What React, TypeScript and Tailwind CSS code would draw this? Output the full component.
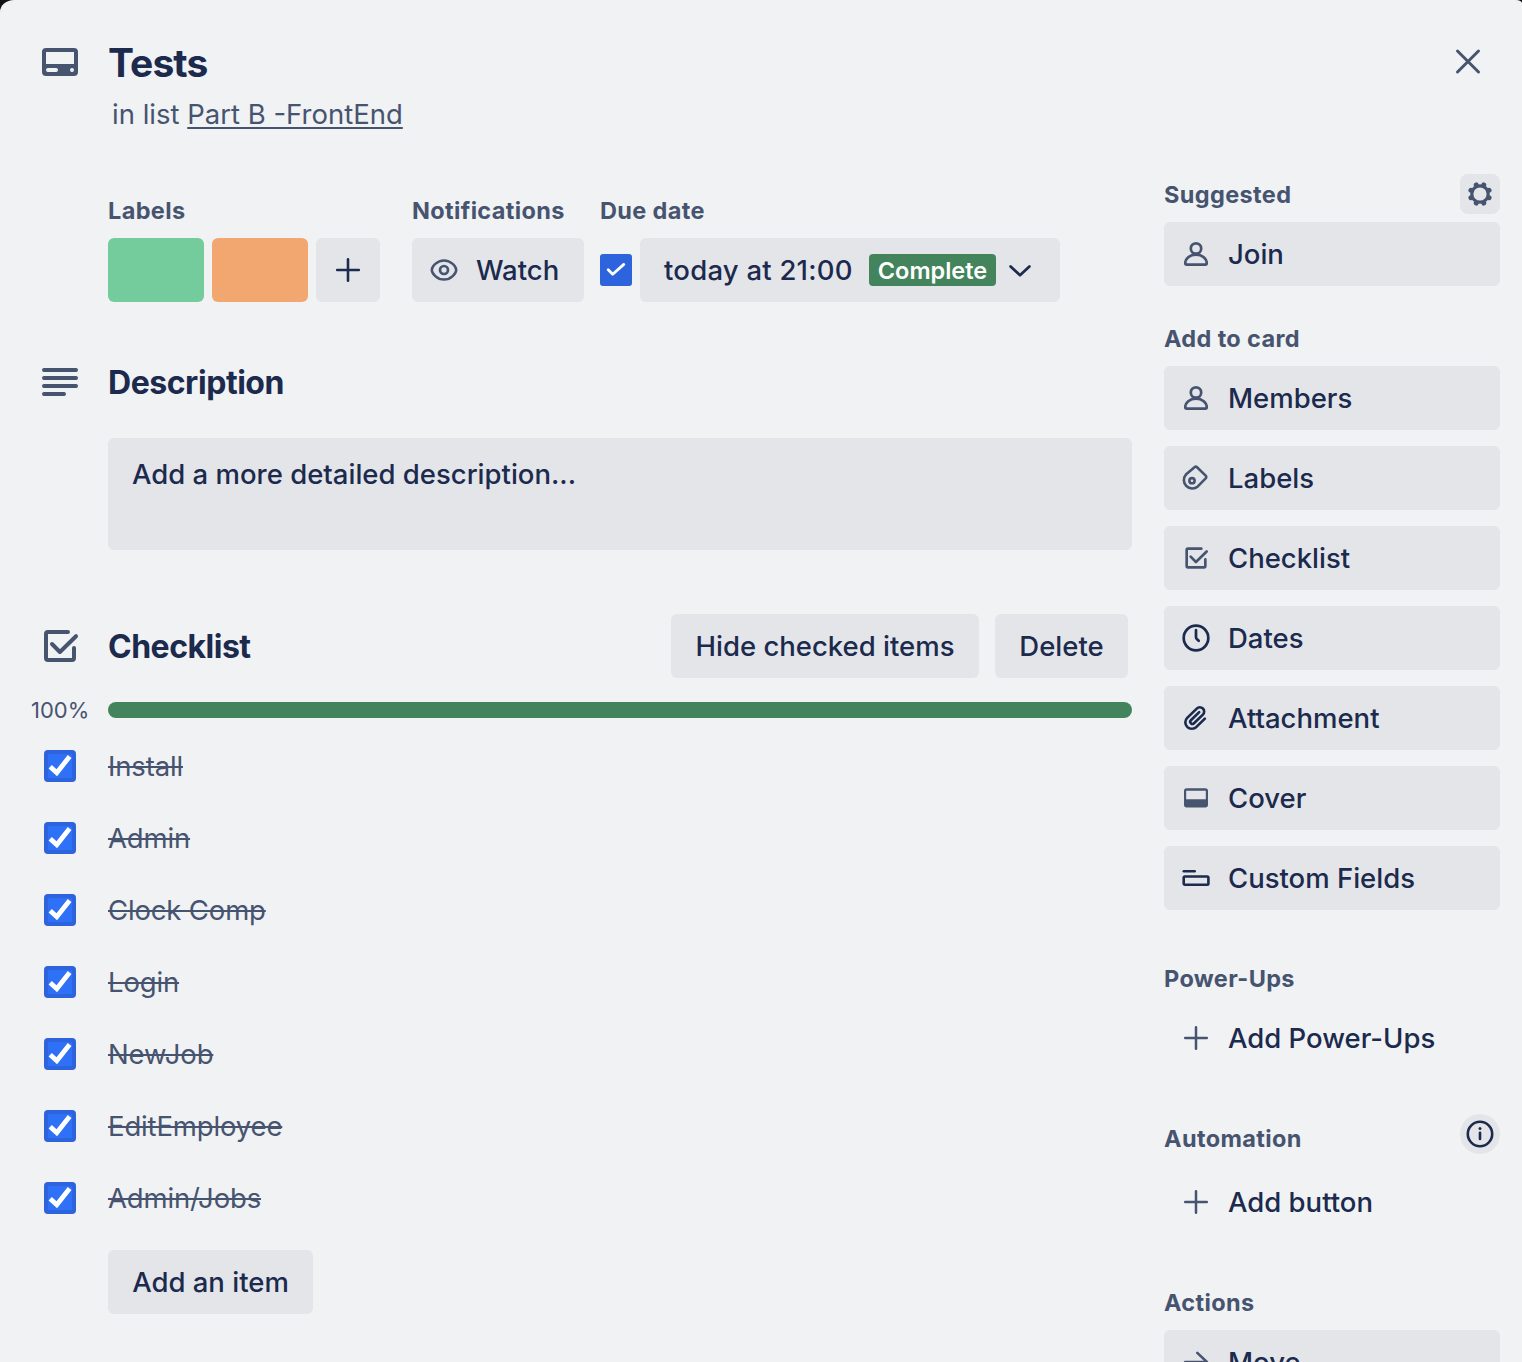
import type { ReactNode } from "react";

const SLATE = "text-[#475470]";
const NAVY = "text-[#1b2a4d]";

function Icon({ size = 32, box = 32, className = "", children }: { size?: number; box?: number; className?: string; children: ReactNode }) {
  return (
    <svg
      width={size}
      height={size}
      viewBox={`0 0 ${box} ${box}`}
      fill="none"
      stroke="currentColor"
      strokeLinecap="round"
      strokeLinejoin="round"
      className={`shrink-0 ${className}`}
    >
      {children}
    </svg>
  );
}

const CardIcon = () => (
  <Icon size={48} box={24} className={SLATE}>
    <path
      fill="currentColor"
      stroke="none"
      fillRule="evenodd"
      d="M5 5h14a2 2 0 0 1 2 2v10a2 2 0 0 1-2 2H5a2 2 0 0 1-2-2V7a2 2 0 0 1 2-2ZM5 7v6h14V7H5ZM6 15a1 1 0 0 0 0 2h4a1 1 0 0 0 0-2H6ZM18 15a1 1 0 0 0 0 2a1 1 0 0 0 0-2Z"
    />
  </Icon>
);

const TextIcon = () => (
  <Icon size={48} box={24} className={SLATE}>
    <path strokeWidth="2" d="M4 6h16M4 10h16M4 14h16M4 18h10" />
  </Icon>
);

const ChecklistIcon = ({ size = 32 }: { size?: number }) => (
  <Icon size={size} box={24} className={SLATE}>
    <path strokeWidth="2" d="M16 5H6a1 1 0 0 0-1 1v12a1 1 0 0 0 1 1h12a1 1 0 0 0 1-1v-5" />
    <path strokeWidth="2" d="M8 11l3.95 4L20 7.1" />
  </Icon>
);

const PersonIcon = () => (
  <Icon className={SLATE}>
    <circle cx="16" cy="10.5" r="5.2" strokeWidth="2.7" />
    <path strokeWidth="2.7" d="M5.3 25.2C5.3 20.6 9.6 16.7 16 16.7S26.7 20.6 26.7 25.2Q26.7 26.6 25.3 26.6H6.7Q5.3 26.6 5.3 25.2Z" />
  </Icon>
);

const LabelIcon = () => (
  <Icon className={SLATE}>
    <path strokeWidth="2.6" d="M14.8 5Q15.8 4.1 16.8 5L25.9 13.9Q26.8 15 25.9 16.1L17.8 24.4A8.4 8.4 0 0 1 5.9 12.6Z" />
    <circle cx="12" cy="18.7" r="2.6" strokeWidth="2.6" />
  </Icon>
);

const ClockIcon = () => (
  <Icon className={NAVY}>
    <circle cx="16" cy="16" r="12.3" strokeWidth="2.7" />
    <path strokeWidth="2.7" d="M16 8.2V15.3Q16 16.3 16.8 17L18.7 18.8" />
  </Icon>
);

const ClipIcon = () => (
  <Icon box={24} className={NAVY}>
    <path
      fill="currentColor"
      stroke="none"
      d="M11.643 17.965c-1.53 1.495-4.016 1.496-5.542.004a3.773 3.773 0 0 1 .002-5.412l7.147-6.985a2.316 2.316 0 0 1 3.233-.003c.893.873.895 2.282.004 3.153l-6.703 6.55a.653.653 0 0 1-.914-.008.62.62 0 0 1 0-.902l6.229-6.087a.941.941 0 0 0 0-1.353.995.995 0 0 0-1.384 0l-6.23 6.087a2.502 2.502 0 0 0 0 3.607 2.643 2.643 0 0 0 3.683.009l6.703-6.55a4.074 4.074 0 0 0-.003-5.859 4.306 4.306 0 0 0-6.002.003l-7.148 6.985a5.655 5.655 0 0 0-.001 8.118c2.29 2.237 6.015 2.237 8.308-.005l6.319-6.175a.942.942 0 0 0 0-1.353.997.997 0 0 0-1.385 0l-6.316 6.176z"
    />
  </Icon>
);

const CoverIcon = () => (
  <Icon className={SLATE}>
    <path
      fill="currentColor"
      stroke="none"
      fillRule="evenodd"
      d="M6.67 6.2h18.66A2.67 2.67 0 0 1 28 8.87v14A2.67 2.67 0 0 1 25.33 25.5H6.67A2.67 2.67 0 0 1 4 22.87v-14A2.67 2.67 0 0 1 6.67 6.2ZM6.2 8.8v8.5h19.6V8.8H6.2Z"
    />
  </Icon>
);

const FieldsIcon = () => (
  <Icon className={NAVY}>
    <path strokeWidth="2.6" d="M3.8 9.3H14.7" />
    <rect x="3.7" y="14.5" width="24.7" height="8.2" rx="1.2" strokeWidth="2.6" />
  </Icon>
);

const PlusIcon = ({ className = SLATE, w = 2.5 }: { className?: string; w?: number }) => (
  <Icon className={className}>
    <path strokeWidth={w} d="M16 5.2V26.8M5.2 16H26.8" />
  </Icon>
);

const ArrowIcon = () => (
  <Icon className={SLATE}>
    <path strokeWidth="2.5" d="M5.1 16H26.9M17.3 6.8L26.9 16L17.3 25.2" />
  </Icon>
);

const EyeIcon = () => (
  <Icon className={SLATE}>
    <path strokeWidth="2.5" d="M3.8 16C3.8 12.6 9 6.4 16 6.4S28.2 12.6 28.2 16S23 25.6 16 25.6S3.8 19.4 3.8 16Z" />
    <circle cx="16" cy="16" r="4" strokeWidth="2.7" />
  </Icon>
);

const GearIcon = () => (
  <Icon className={SLATE}>
    <circle cx="16" cy="16" r="8.2" strokeWidth="3.2" />
    <g fill="currentColor" stroke="none">
      {[22.5, 67.5, 112.5, 157.5, 202.5, 247.5, 292.5, 337.5].map((a) => (
        <circle key={a} cx="25.8" cy="16" r="2.5" transform={`rotate(${a} 16 16)`} />
      ))}
    </g>
  </Icon>
);

const InfoIcon = () => (
  <Icon className={NAVY}>
    <circle cx="16" cy="16" r="12.2" strokeWidth="2.6" />
    <path strokeWidth="2.6" d="M16 14.9V21" />
    <circle cx="16" cy="10.6" r="1.5" fill="currentColor" stroke="none" />
  </Icon>
);

function Heading({ children }: { children: ReactNode }) {
  return <h3 className="pt-px text-[23.5px] leading-6 font-[650] tracking-[0.36px] whitespace-nowrap text-[#475470]">{children}</h3>;
}

function SideHeading({ title, aside }: { title: string; aside?: ReactNode }) {
  return (
    <div className="flex h-10 items-center justify-between">
      <div className="pt-px">
        <Heading>{title}</Heading>
      </div>
      {aside}
    </div>
  );
}

function SideButton({ icon, label, plain }: { icon: ReactNode; label: string; plain?: boolean }) {
  return (
    <button
      className={`flex h-16 w-full shrink-0 items-center gap-4 rounded-md px-4 text-[27.5px] font-medium whitespace-nowrap text-[#1b2a4d] ${plain ? "" : "bg-[#e4e5e9]"}`}
    >
      {icon}
      <span className="pt-0.5">{label}</span>
    </button>
  );
}

function GrayButton({ children, className }: { children: ReactNode; className: string }) {
  return (
    <button className={`flex h-16 items-center rounded-md bg-[#e4e5e9] text-[27.5px] font-medium whitespace-nowrap text-[#1b2a4d] ${className}`}>
      {children}
    </button>
  );
}

function CheckItem({ label }: { label: string }) {
  return (
    <li className="flex h-[72px] items-start">
      <span className="ml-11 h-8 w-8 shrink-0 rounded-[4px] bg-[#2d63dd]">
        <svg width="32" height="32" viewBox="0 0 32 32" fill="none">
          <rect x="4" y="4" width="24" height="24" fill="#2f71f6" />
          <path d="M6.2 16.7L12.8 22.8L25.6 6.5" stroke="#fff" strokeWidth="4.8" />
        </svg>
      </span>
      <span className="ml-8 text-[27.5px] leading-8 tracking-[-0.15px] whitespace-nowrap text-[#475470] line-through decoration-2">{label}</span>
    </li>
  );
}

const cardActions: [string, ReactNode][] = [
  ["Members", <PersonIcon />],
  ["Labels", <LabelIcon />],
  ["Checklist", <ChecklistIcon />],
  ["Dates", <ClockIcon />],
  ["Attachment", <ClipIcon />],
  ["Cover", <CoverIcon />],
  ["Custom Fields", <FieldsIcon />],
];

const items = ["Install", "Admin", "Clock Comp", "Login", "NewJob", "EditEmployee", "Admin/Jobs"];

export default function App() {
  return (
    <div className="h-[1362px] w-[1522px] overflow-hidden bg-[#10120f] font-['Inter',sans-serif]">
      <div className="h-full overflow-hidden rounded-tl-[14px_12px] rounded-tr-[6px_3px] bg-[#f1f2f4]">
        <header className="flex h-[166px] items-start">
          <div className="mt-[38px] ml-9">
            <CardIcon />
          </div>
          <div className="mt-[39px] ml-6 flex-1">
            <h1 className="text-[39px] leading-[48px] font-[650] tracking-[-0.9px] text-[#1b2a4d]">Tests</h1>
            <p className="mt-[11px] ml-1 text-[27.5px] leading-8 text-[#475470]">
              in list <span className="underline decoration-2 underline-offset-[3px]">Part B -FrontEnd</span>
            </p>
          </div>
          <button className="mt-[45px] mr-[38px]">
            <Icon className={SLATE}>
              <path strokeWidth="3" d="M5.5 6L26.5 27M26.5 6L5.5 27" />
            </Icon>
          </button>
        </header>

        <div className="flex gap-8">
          <main className="w-[1132px] shrink-0 pt-8">
            <section className="ml-[108px] flex">
              <div className="w-[304px]">
                <Heading>Labels</Heading>
                <div className="mt-[15px] flex gap-2">
                  <div className="h-16 w-24 rounded-md bg-[#74cc9c]" />
                  <div className="h-16 w-24 rounded-md bg-[#f2a770]" />
                  <GrayButton className="w-16 justify-center">
                    <PlusIcon className={NAVY} w={2.6} />
                  </GrayButton>
                </div>
              </div>
              <div className="w-[188px]">
                <Heading>Notifications</Heading>
                <GrayButton className="mt-[15px] w-[172px] gap-4 pl-4">
                  <EyeIcon />
                  <span className="pt-0.5">Watch</span>
                </GrayButton>
              </div>
              <div>
                <Heading>Due date</Heading>
                <div className="mt-[15px] flex items-center gap-2">
                  <span className="h-8 w-8 rounded-[3px] bg-[#2d63dd]">
                    <Icon className="text-white">
                      <path strokeWidth="2.8" d="M8.2 15.8L12.7 20.2L23.8 10.4" />
                    </Icon>
                  </span>
                  <GrayButton className="w-[420px] pl-6">
                    <span className="w-[205px] pt-0.5 text-left tracking-[0.23px]">today at 21:00</span>
                    <span className="flex h-8 w-[127px] items-center justify-center rounded-[4px] bg-[#43845d] pt-0.5 text-[23.5px] font-semibold text-white">
                      Complete
                    </span>
                    <Icon className={`ml-2 ${NAVY}`}>
                      <path strokeWidth="2.7" d="M6.6 12.4L16 21.2L25.4 12.4" />
                    </Icon>
                  </GrayButton>
                </div>
              </div>
            </section>

            <section className="mt-14">
              <div className="flex h-12 items-center gap-6 pl-9">
                <TextIcon />
                <h2 className="pt-0.5 text-[32px] font-[650] tracking-[-0.45px] text-[#1b2a4d]">Description</h2>
              </div>
              <div className="mt-8 ml-[108px] h-28 rounded-md bg-[#e4e5e9] px-6 pt-5 text-[27.5px] leading-8 font-medium text-[#1b2a4d]">
                Add a more detailed description...
              </div>
            </section>

            <section className="mt-16">
              <div className="flex h-16 items-center pr-1 pl-9">
                <ChecklistIcon size={48} />
                <h2 className="ml-6 flex-1 pt-0.5 text-[32px] font-[650] tracking-[-0.5px] text-[#1b2a4d]">Checklist</h2>
                <GrayButton className="w-[308px] justify-center pt-0.5">Hide checked items</GrayButton>
                <GrayButton className="ml-4 w-[133px] justify-center pt-0.5">Delete</GrayButton>
              </div>
              <div className="mt-6 flex h-4 items-center">
                <span className="w-[108px] pl-[31px] text-[22px] leading-4 text-[#475470]">100%</span>
                <div className="h-4 flex-1 rounded-full bg-[#43845d]" />
              </div>
              <ul className="mt-8">
                {items.map((label) => (
                  <CheckItem key={label} label={label} />
                ))}
              </ul>
              <GrayButton className="-mt-1 ml-[108px] w-[205px] justify-center pt-0.5">Add an item</GrayButton>
            </section>
          </main>

          <aside className="flex w-[336px] shrink-0 flex-col pt-2">
            <SideHeading
              title="Suggested"
              aside={
                <button className="flex h-10 w-10 items-center justify-center rounded-lg bg-[#e4e5e9]">
                  <GearIcon />
                </button>
              }
            />
            <div className="mt-2 mb-8">
              <SideButton icon={<PersonIcon />} label="Join" />
            </div>
            <SideHeading title="Add to card" />
            <div className="mt-2 mb-12 flex flex-col gap-4">
              {cardActions.map(([label, icon]) => (
                <SideButton key={label} icon={icon} label={label} />
              ))}
            </div>
            <SideHeading title="Power-Ups" />
            <div className="mt-2 mb-11">
              <SideButton icon={<PlusIcon />} label="Add Power-Ups" plain />
            </div>
            <div className="flex h-10 justify-between">
              <div className="pt-3">
                <Heading>Automation</Heading>
              </div>
              <button className="flex h-10 w-10 items-center justify-center rounded-full bg-[#e4e5e9]">
                <InfoIcon />
              </button>
            </div>
            <div className="mt-4 mb-12">
              <SideButton icon={<PlusIcon />} label="Add button" plain />
            </div>
            <SideHeading title="Actions" />
            <div className="mt-2">
              <SideButton icon={<ArrowIcon />} label="Move" />
            </div>
          </aside>
        </div>
      </div>
    </div>
  );
}
